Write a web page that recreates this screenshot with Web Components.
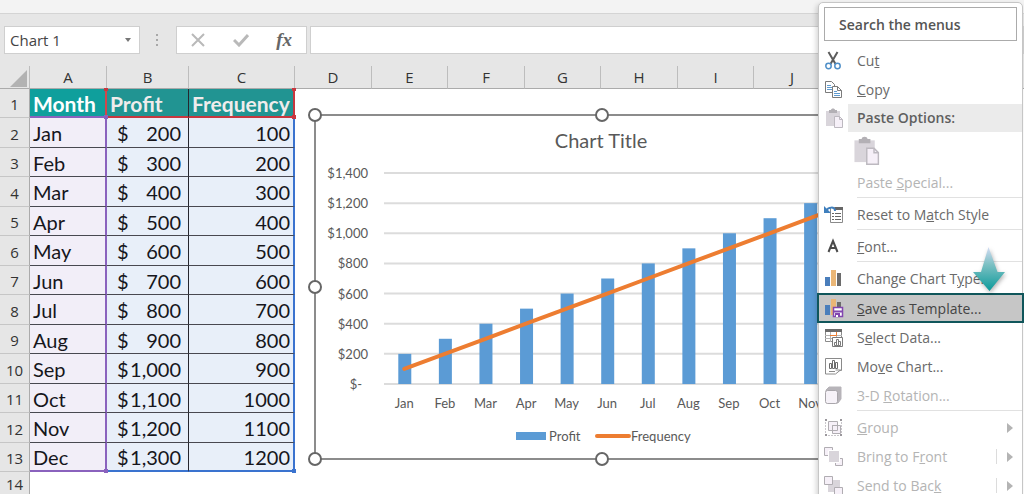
<!DOCTYPE html>
<html lang="en">
<head>
<meta charset="utf-8">
<meta name="viewport" content="width=device-width, initial-scale=1">
<title>Chart 1</title>
<style>
  body {
    margin: 0;
    height: 100vh;
    overflow: hidden;
    background: #fff;
    color: #222;
    font-family: "Open Sans", "Noto Sans", sans-serif;
    font-size: 14px;
  }
</style>
</head>
<body>
<sheet-app>
  <formula-bar slot="toolbar" name="Chart 1"></formula-bar>
  <sheet-grid slot="sheet">
    <sheet-chart heading="Chart Title"></sheet-chart>
  </sheet-grid>
  <context-menu slot="menu">
    <menu-entry icon="cut">Cu<u>t</u></menu-entry>
    <menu-entry icon="copy"><u>C</u>opy</menu-entry>
    <menu-heading icon="paste">Paste Options:</menu-heading>
    <paste-choice></paste-choice>
    <menu-entry disabled>Paste <u>S</u>pecial...</menu-entry>
    <menu-line></menu-line>
    <menu-entry icon="reset">Reset to M<u>a</u>tch Style</menu-entry>
    <menu-line></menu-line>
    <menu-entry icon="font"><u>F</u>ont...</menu-entry>
    <menu-line></menu-line>
    <menu-entry icon="chart">Change Chart T<u>y</u>pe...</menu-entry>
    <menu-entry icon="template" active><u>S</u>ave as Template...</menu-entry>
    <menu-entry icon="data">S<u>e</u>lect Data...</menu-entry>
    <menu-entry icon="move">Mo<u>v</u>e Chart...</menu-entry>
    <menu-entry icon="cube" disabled>3-D <u>R</u>otation...</menu-entry>
    <menu-line></menu-line>
    <menu-entry icon="group" disabled submenu><u>G</u>roup</menu-entry>
    <menu-entry icon="front" disabled submenu="split">Bring to F<u>r</u>ont</menu-entry>
    <menu-entry icon="back" disabled submenu="split">Send to Bac<u>k</u></menu-entry>
  </context-menu>
</sheet-app>

<script>
const MONTHS = ['Jan', 'Feb', 'Mar', 'Apr', 'May', 'Jun', 'Jul', 'Aug', 'Sep', 'Oct', 'Nov', 'Dec'];
const ROWS = MONTHS.map((month, i) => ({
  month,
  profit: 200 + i * 100,
  frequency: 100 + i * 100,
}));

const pasteIcon = `
  <path fill="#d9d5db" d="M1 3h14v15H1z"/>
  <path fill="#b3b0b5" d="M4 2h2c0-2 4-2 4 0h2v3H4z"/>
  <path fill="#f6f0f8" stroke="#bdb9c0" d="M9.500 8.500h5l3 3v8h-8z"/>
  <path fill="none" stroke="#bdb9c0" d="M14.500 8.500v3h3"/>`;

const ICONS = {
  cut: `
    <path stroke="#5c5c5c" stroke-width="2" fill="none" d="M4.500 1l7 12M13.500 1l-7 12"/>
    <g fill="none" stroke="#4f8fc8" stroke-width="1.500"><circle cx="4.500" cy="15" r="2.700"/><circle cx="13.500" cy="15" r="2.700"/></g>`,
  copy: `
    <path fill="#fff" stroke="#7b7b7b" d="M1.500 1.500h6l3 3v8h-9z"/>
    <path stroke="#5f9bd0" d="M3 5.500h4M3 7.500h5M3 9.500h5"/>
    <path fill="#fff" stroke="#7b7b7b" d="M8.500 6.500h5l4 4v7h-9z"/>
    <path fill="none" stroke="#7b7b7b" d="M13.500 6.500v4h4"/>
    <path stroke="#5f9bd0" d="M10 11.500h3M10 13.500h6M10 15.500h6"/>`,
  paste: pasteIcon,
  reset: `
    <path fill="#fff" stroke="#8a8a8a" d="M6.500 2.500h12v15h-12z"/>
    <path fill="#666" d="M11 2h8v3h-8z"/>
    <path stroke="#666" d="M8 8.500h2M11 8.500h6M8 11.500h2M11 11.500h6M8 14.500h2M11 14.500h6"/>
    <path fill="none" stroke="#3f7fbd" stroke-width="2" d="M11 6c0-5-7-4-9 0"/>
    <path fill="#3f7fbd" d="M0 1v7h7z"/>`,
  font: `<path fill="none" stroke="#4b4b4b" stroke-width="2" d="M4.500 15l4.500-11 4.500 11M6 11h6"/>`,
  chart: `
    <path fill="#4a7ebb" d="M1 8h5v9H1z"/>
    <path fill="#eab676" d="M7 1h5v16H7z"/>
    <path fill="#6b6b6b" d="M13 4h4v13h-4z"/>`,
  template: `
    <path fill="#4a7ebb" d="M1 7h5v10H1z"/>
    <path fill="#eab676" d="M7 1h5v16H7z"/>
    <path fill="#6b6b6b" d="M13 4h4v5h-4z"/>
    <path fill="#fff" stroke="#8246af" stroke-width="1.500" d="M9.500 9.500h9v9h-9z"/>
    <path fill="#8246af" d="M9 12.500h10v2H9zM11 15h5v4h-5z"/>
    <path fill="#fff" d="M12 17h2v2h-2z"/>`,
  data: `
    <path fill="#fff" stroke="#8a8a8a" d="M1.500 1.500h16v12h-16z"/>
    <path fill="#6b6b6b" d="M1 1h17v3H1z"/>
    <path stroke="#b5b5b5" fill="none" d="M1 7.500h17M1 10.500h17M6.500 4v10M12.500 4v5"/>
    <path stroke="#ed7d31" fill="none" d="M6 7.500h6.500V4"/>
    <path fill="#fff" stroke="#7b7b7b" d="M8.500 9.500h10v9h-10zM10.500 17.500v-3h2v3zM12.500 17.500v-6h2v6zM14.500 17.500v-4h2v4z"/>`,
  move: `
    <path fill="#fff" stroke="#8a8a8a" d="M6.500 13.500h-5v-12h16v12h-3"/>
    <path fill="#fff" stroke="#6b6b6b" d="M5.500 11.500v-5h2v5zM8.500 11.500v-8h2v8zM11.500 11.500v-6h2v6z"/>
    <path fill="#fff" stroke="#8a8a8a" d="M1.500 13v4h10l5-4h-5"/>
    <path stroke="#8a8a8a" fill="none" d="M5 14.500h6"/>`,
  cube: `
    <path fill="#b7b4b9" stroke="#b7b4b9" stroke-linejoin="round" d="M2 4l3-3h12v12l-3 4H3z"/>
    <rect x="1.500" y="4.500" width="12" height="13" rx="2" fill="#f6f2f8" stroke="#a9a6ab"/>`,
  group: `
    <path fill="#f6f0f8" stroke="#b0adb2" d="M4.500 3.500h9v9h-9zM8.500 7.500h8v8h-8z"/>
    <path fill="none" stroke="#b0adb2" d="M8.500 12.500v-5h5"/>
    <path fill="#9a979c" d="M1 1h2v2H1zM16 1h2v2h-2zM1 16h2v2H1zM16 16h2v2h-2z"/>
    <path stroke="#c9c6cb" fill="none" stroke-dasharray="2 1" d="M1.500 4v11M17.500 4v11M4 17.500h11"/>`,
  front: `
    <path fill="#f6f0f8" stroke="#b0adb2" d="M.5.5h8v8h-8zM11.500 11.500h7v7h-7z"/>
    <path fill="#d9d5db" stroke="#fff" d="M4.500 3.500h11v12h-11z"/>`,
  back: `
    <path fill="#d9d5db" d="M8 4h8v8H8zM4 9h8v7H4z"/>
    <path fill="#f6f0f8" stroke="#b0adb2" d="M.5.5h8v8h-8zM10.500 11.500h8v7h-8z"/>`,
};

function iconSvg(name) {
  return ICONS[name]
    ? `<svg width="20" height="20" viewBox="0 0 20 20" aria-hidden="true">${ICONS[name]}</svg>`
    : '';
}

class SheetApp extends HTMLElement {
  constructor() {
    super();
    this.attachShadow({ mode: 'open' });
    this.shadowRoot.innerHTML = `
      <style>
        :host {
          display: flex;
          flex-direction: column;
          position: relative;
          height: 100%;
          overflow: hidden;
        }

        .ribbon-edge {
          flex: none;
          height: 13px;
          background: #f3f3f3;
          border-bottom: 1px solid #d4d4d4;
        }

        .menu {
          position: absolute;
          top: 2px;
          right: 1px;
          width: 205px;
        }

        .pointer {
          position: absolute;
          top: 247px;
          right: 19px;
          filter: drop-shadow(1px 2px 2px rgba(0, 0, 0, 0.3));
        }
      </style>
      <div class="ribbon-edge"></div>
      <slot name="toolbar"></slot>
      <slot name="sheet"></slot>
      <div class="menu"><slot name="menu"></slot></div>
      <svg class="pointer" width="32" height="44" viewBox="0 0 32 44" aria-hidden="true">
        <linearGradient id="fade" x2="0" y2="1">
          <stop stop-color="#d3dcf4"/>
          <stop offset=".4" stop-color="#7cc0c3"/>
          <stop offset="1" stop-color="#0b9a9a"/>
        </linearGradient>
        <path fill="url(#fade)" d="M15.500 0l9 25H32L16.500 44 0 25h8z"/>
      </svg>
    `;
  }
}

class FormulaBar extends HTMLElement {
  constructor() {
    super();
    this.attachShadow({ mode: 'open' });
  }

  connectedCallback() {
    this.render();
  }

  render() {
    this.shadowRoot.innerHTML = `
      <style>
        :host {
          display: flex;
          flex: none;
          padding: 12px 0 12px 4px;
          background: #e6e6e6;
        }

        .box {
          display: flex;
          align-items: center;
          box-sizing: border-box;
          height: 28px;
          background: #fff;
          border: 1px solid #cfcfcf;
        }

        .name-box {
          width: 136px;
        }

        input {
          flex: 1;
          min-width: 0;
          padding: 0 0 0 5px;
          border: 0;
          outline: 0;
          background: none;
          color: #444;
          font: 15px "Open Sans", sans-serif;
        }

        button {
          display: flex;
          align-items: center;
          justify-content: center;
          padding: 0;
          border: 0;
          background: none;
        }

        .drop {
          width: 22px;
        }

        .dots {
          width: 36px;
          align-self: center;
        }

        .actions {
          justify-content: space-around;
          width: 131px;
          margin-right: 3px;
        }

        .fx {
          color: #666;
          font: italic 700 19px "Liberation Serif", serif;
        }

        .formula {
          flex: 1;
        }
      </style>
      <div class="box name-box">
        <input aria-label="Name box" value="${this.getAttribute('name') || ''}">
        <button class="drop" aria-label="Names">
          <svg width="6" height="4"><path fill="#777" d="M0 0h6L3 4z"/></svg>
        </button>
      </div>
      <svg class="dots" width="36" height="14" viewBox="0 0 36 14" aria-hidden="true">
        <path fill="#a8a8a8" d="M16 1h2v2h-2zM16 6h2v2h-2zM16 11h2v2h-2z"/>
      </svg>
      <div class="box actions">
        <button aria-label="Cancel">
          <svg width="14" height="14"><path stroke="#b9b9b9" stroke-width="2" d="M1 1l12 12M13 1L1 13"/></svg>
        </button>
        <button aria-label="Enter">
          <svg width="16" height="14"><path fill="none" stroke="#b9b9b9" stroke-width="3" d="M1 7l5 5 9-10"/></svg>
        </button>
        <button class="fx" title="Insert function">fx</button>
      </div>
      <div class="box formula"><input aria-label="Formula bar"></div>
    `;
  }
}

class SheetGrid extends HTMLElement {
  constructor() {
    super();
    this.attachShadow({ mode: 'open' });
  }

  connectedCallback() {
    this.render();
  }

  render() {
    const letters = 'ABCDEFGHIJ'.split('');
    const body = ROWS.map(
      (row, i) => `
        <tr>
          <th scope="row">${i + 2}</th>
          <td class="month">${row.month}</td>
          <td class="profit"><div><span>$</span><span>${row.profit.toLocaleString('en-US')}</span></div></td>
          <td class="frequency">${row.frequency}</td>
        </tr>`
    ).join('');

    this.shadowRoot.innerHTML = `
      <style>
        :host {
          display: block;
          flex: 1;
          min-height: 0;
          overflow: hidden;
        }

        table {
          table-layout: fixed;
          width: 100%;
          border-spacing: 0;
        }

        .corner { width: 30px; }
        .a { width: 77px; }
        .b { width: 82px; }
        .c { width: 106px; }
        .wide { width: 76px; }
        .wide:nth-child(odd) { width: 77px; }

        th, td {
          box-sizing: border-box;
          padding: 0;
        }

        thead th {
          height: 23px;
          background: #e6e6e6;
          border-right: 1px solid #bdbdbd;
          border-bottom: 1px solid #ababab;
          color: #333;
          font-size: 15px;
          font-weight: 400;
          line-height: 22px;
        }

        thead td {
          background: #e6e6e6;
          border-bottom: 1px solid #ababab;
        }

        thead svg {
          display: block;
          margin: 3px 2px 0 auto;
        }

        tbody th {
          padding-top: 2px;
          background: #e6e6e6;
          border-right: 1px solid #ababab;
          border-bottom: 1px solid #c6c6c6;
          color: #333;
          font-size: 15px;
          font-weight: 400;
          line-height: 26px;
        }

        tbody tr { height: 30px; }
        tbody tr:nth-child(odd) { height: 29px; }

        tbody td {
          position: relative;
          padding-top: 2px;
          border-bottom: 1px solid #484850;
          color: #16161c;
          font-family: Lato, sans-serif;
          font-size: 20px;
          line-height: 25px;
          white-space: nowrap;
        }

        .title td {
          border-bottom: 2px solid #c8373f;
          background: #219492;
          color: #f0ecec;
          font-size: 21px;
          font-weight: 700;
          padding-left: 3px;
        }

        .title .month {
          background: #0f9f9c;
          border-right-color: #d0454b;
          border-bottom-color: #8a62bd;
          color: #fff;
        }

        .title .frequency {
          border-right-color: #c8373f;
          text-align: left;
        }

        .month {
          padding-left: 3px;
          background: #f2eef8;
          border-right: 2px solid #8a62bd;
        }

        .profit {
          background: #e8eff9;
          border-right: 1px solid #26262e;
        }

        .profit div {
          display: flex;
          justify-content: space-between;
          padding: 0 7px 0 10px;
        }

        .frequency {
          padding-right: 3px;
          background: #e8eff9;
          border-right: 2px solid #3a73cf;
          text-align: right;
        }

        tr:nth-child(13) td { border-bottom: 2px solid #3a73cf; }
        tr:nth-child(13) .month { border-bottom-color: #8a62bd; }

        /* drag handles of the highlighted ranges */
        .title .month::after,
        .title .frequency::after,
        tr:nth-child(13) .month::after,
        tr:nth-child(13) .frequency::after {
          content: "";
          position: absolute;
          right: -3px;
          bottom: -3px;
          z-index: 1;
          width: 4px;
          height: 4px;
          background: #8a62bd;
        }

        .title .month::before,
        .title .frequency::before {
          content: "";
          position: absolute;
          top: -1px;
          right: -3px;
          z-index: 1;
          width: 4px;
          height: 3px;
          background: #c8373f;
        }

        .title .frequency::after { background: #c8373f; }
        tr:nth-child(13) .frequency::after { background: #3a73cf; }

        tbody .blank,
        tbody .canvas {
          border: 0;
          background: #fff;
        }

        .title .canvas {
          padding: 19px 0 0 13px;
          vertical-align: top;
        }

        tbody tr:last-child th {
          padding-top: 0;
          vertical-align: top;
          line-height: 24px;
        }
      </style>
      <table>
        <colgroup>
          <col class="corner"><col class="a"><col class="b"><col class="c">
          ${letters.slice(3).map(() => '<col class="wide">').join('')}
          <col>
        </colgroup>
        <thead>
          <tr>
            <th aria-label="Select all"><svg width="17" height="17"><path fill="#b2b2b2" d="M17 0v17H0z"/></svg></th>
            ${letters.map((letter) => `<th scope="col">${letter}</th>`).join('')}
            <td></td>
          </tr>
        </thead>
        <tbody>
          <tr class="title">
            <th scope="row">1</th>
            <td class="month">Month</td>
            <td class="profit">Profit</td>
            <td class="frequency">Frequency</td>
            <td class="canvas" rowspan="14" colspan="${letters.length - 2}"><slot></slot></td>
          </tr>
          ${body}
          <tr>
            <th scope="row">14</th>
            <td class="blank"></td><td class="blank"></td><td class="blank"></td>
          </tr>
        </tbody>
      </table>
    `;
  }
}

class SheetChart extends HTMLElement {
  constructor() {
    super();
    this.attachShadow({ mode: 'open' });
  }

  connectedCallback() {
    this.render();
  }

  render() {
    // plot area, in the chart's own units
    const left = 76;
    const right = 563;
    const top = 65;
    const bottom = 276;
    const max = 1400;
    const step = (right - left) / ROWS.length;
    const x = (i) => left + step * (i + 0.5);
    const y = (value) => bottom - ((bottom - top) * value) / max;

    let grid = '';
    for (let value = 0; value <= max; value += 200) {
      const label = value ? '$' + value.toLocaleString('en-US') : '$-';
      grid += `
        <line class="grid" x1="${left}" x2="${right}" y1="${y(value)}" y2="${y(value)}"/>
        <text x="${value ? 60 : 54}" y="${y(value) + 5}" text-anchor="end">${label}</text>`;
    }

    const bars = ROWS.map(
      (row, i) =>
        `<rect class="bar" x="${x(i) - 6}" y="${y(row.profit)}" width="13" height="${bottom - y(row.profit)}"/>`
    ).join('');

    // the last month sits under the open menu, so it gets no label
    const labels = ROWS.slice(0, -1)
      .map((row, i) => `<text x="${x(i)}" y="300" text-anchor="middle">${row.month}</text>`)
      .join('');

    const points = ROWS.map((row, i) => `${x(i)},${y(row.frequency)}`).join(' ');

    const handles = [
      [7, 7], [294, 7], [581, 7],
      [7, 179], [581, 179],
      [7, 351], [294, 351], [581, 351],
    ].map(([cx, cy]) => `<circle class="handle" cx="${cx}" cy="${cy}" r="6"/>`).join('');

    this.shadowRoot.innerHTML = `
      <style>
        :host { display: block; }
        svg { display: block; }
        text { fill: #595959; font: 13px Lato, sans-serif; }
        .heading { font-size: 20px; }
        .frame { fill: #fff; stroke: #8c8c8c; stroke-width: 2; }
        .grid { stroke: #dcdcdc; stroke-width: 2; }
        .bar { fill: #5b9bd5; }
        .line { fill: none; stroke: #ed7d31; stroke-width: 4; stroke-linecap: round; }
        .handle { fill: #fff; stroke: #666; stroke-width: 2; }
      </style>
      <svg width="588" height="358" viewBox="0 0 588 358" role="img" aria-label="Profit and frequency by month">
        <rect class="frame" x="7" y="7" width="574" height="344"/>
        <text class="heading" x="293" y="40" text-anchor="middle">${this.getAttribute('heading') || ''}</text>
        ${grid}
        ${bars}
        ${labels}
        <polyline class="line" points="${points}"/>
        <rect class="bar" x="208" y="324" width="30" height="8"/>
        <text x="241" y="333">Profit</text>
        <line class="line" x1="289" x2="321" y1="328" y2="328"/>
        <text x="323" y="333">Frequency</text>
        ${handles}
      </svg>
    `;
  }
}

class ContextMenu extends HTMLElement {
  constructor() {
    super();
    this.attachShadow({ mode: 'open' });
    this.shadowRoot.innerHTML = `
      <style>
        :host {
          display: block;
          background: #fff;
          border: 1px solid #c6c6c6;
          border-radius: 5px;
          box-shadow: -2px 2px 5px rgba(0, 0, 0, 0.16);
        }

        input {
          display: block;
          box-sizing: border-box;
          width: calc(100% - 10px);
          height: 34px;
          margin: 4px 5px 5px;
          padding: 0 14px;
          border: 1px solid #ababab;
          border-radius: 0;
          outline: 0;
          font: 600 14px "Open Sans", sans-serif;
        }

        input::placeholder { color: #555; opacity: 1; }
      </style>
      <input type="search" placeholder="Search the menus" aria-label="Search the menus">
      <slot></slot>
    `;
  }
}

class MenuEntry extends HTMLElement {
  constructor() {
    super();
    this.attachShadow({ mode: 'open' });
  }

  connectedCallback() {
    this.render();
  }

  render() {
    const submenu = this.getAttribute('submenu');

    this.shadowRoot.innerHTML = `
      <style>
        :host { display: block; }

        button {
          display: flex;
          align-items: center;
          box-sizing: border-box;
          width: 100%;
          height: 29px;
          padding: 0 9px 0 5px;
          border: 0;
          background: none;
          color: #6a6a6a;
          font: 14px "Open Sans", sans-serif;
          text-align: left;
        }

        button:disabled { color: #b4b4b4; }

        .icon {
          display: flex;
          flex: none;
          width: 33px;
        }

        .label {
          flex: 1;
          white-space: nowrap;
        }

        .divider {
          align-self: stretch;
          margin: 7px 10px;
          border-left: 1px solid #dcdcdc;
        }

        :host([active]) {
          margin: 0 -2px;
        }

        :host([active]) button {
          height: 30px;
          border: 2px solid #10565b;
          background: #c6c6c6;
          color: #444;
        }
      </style>
      <button type="button" ${this.hasAttribute('disabled') ? 'disabled' : ''}>
        <span class="icon">${iconSvg(this.getAttribute('icon'))}</span>
        <span class="label"><slot></slot></span>
        ${submenu === 'split' ? '<span class="divider"></span>' : ''}
        ${submenu !== null ? '<svg width="6" height="10"><path fill="#b4b4b4" d="M0 0l6 5-6 5z"/></svg>' : ''}
      </button>
    `;
  }
}

class MenuHeading extends HTMLElement {
  constructor() {
    super();
    this.attachShadow({ mode: 'open' });
  }

  connectedCallback() {
    this.shadowRoot.innerHTML = `
      <style>
        :host {
          display: flex;
          align-items: center;
          height: 28px;
          padding-left: 6px;
          color: #5f5f5f;
          font-size: 14px;
          font-weight: 600;
        }

        .icon {
          display: flex;
          width: 23px;
        }

        .label {
          flex: 1;
          padding-left: 9px;
          background: #ebebeb;
          line-height: 28px;
        }
      </style>
      <span class="icon">${iconSvg(this.getAttribute('icon'))}</span>
      <span class="label"><slot></slot></span>
    `;
  }
}

class PasteChoice extends HTMLElement {
  constructor() {
    super();
    this.attachShadow({ mode: 'open' });
    this.shadowRoot.innerHTML = `
      <style>
        :host {
          display: flex;
          align-items: center;
          height: 36px;
          padding-left: 34px;
        }

        button {
          display: flex;
          padding: 0;
          border: 0;
          background: none;
        }
      </style>
      <button type="button" aria-label="Paste" disabled>
        <svg width="29" height="29" viewBox="0 0 20 20">${pasteIcon}</svg>
      </button>
    `;
  }
}

class MenuLine extends HTMLElement {
  constructor() {
    super();
    this.attachShadow({ mode: 'open' });
    this.shadowRoot.innerHTML = `
      <style>
        :host {
          display: block;
          height: 1px;
          margin: 0 0 2px 38px;
          background: #e1e1e1;
        }
      </style>
    `;
  }
}

customElements.define('sheet-app', SheetApp);
customElements.define('formula-bar', FormulaBar);
customElements.define('sheet-grid', SheetGrid);
customElements.define('sheet-chart', SheetChart);
customElements.define('context-menu', ContextMenu);
customElements.define('menu-entry', MenuEntry);
customElements.define('menu-heading', MenuHeading);
customElements.define('paste-choice', PasteChoice);
customElements.define('menu-line', MenuLine);
</script>
</body>
</html>
